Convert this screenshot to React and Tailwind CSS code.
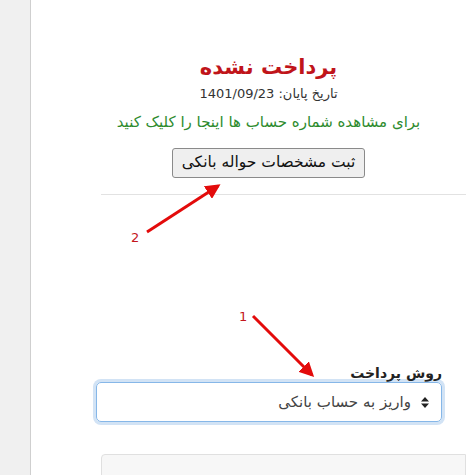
export default function App() {
  const fa = { fontFamily: '"DejaVu Sans", "Noto Sans", sans-serif' };
  return (
    <div className="relative flex h-[475px] w-[466px] overflow-hidden bg-white" style={fa}>
      <div className="w-[31px] shrink-0 border-r border-[#cfcfcf] bg-[#f0f0f0]" />
      <div className="flex-1">
        <div dir="rtl" className="ml-[65px] mr-[25px] flex flex-col items-center pt-[50px]">
          <div className="text-[21px] font-bold leading-[34px] text-[#c0141a]">پرداخت نشده</div>
          <div className="mt-[1px] text-[13px] leading-[18px] text-[#333]">تاریخ پایان: 1401/09/23</div>
          <div className="mt-[8px] text-[15px] leading-[22px] text-[#2e8b2e]">برای مشاهده شماره حساب ها اینجا را کلیک کنید</div>
          <button className="mt-[15px] h-[30px] rounded-[3px] border border-[#8a8a8a] bg-[#efefef] px-[9px] text-[15.5px] text-[#111]">ثبت مشخصات حواله بانکی</button>
        </div>
        <div className="ml-[70px] mt-[16px] h-px bg-[#e2e2e2]" />
        <div dir="rtl" className="ml-[65px] mr-[24px] mt-[168px]">
          <div className="text-[14px] font-bold leading-[20px] text-[#222]">روش پرداخت</div>
          <div className="mt-[-1px] flex h-[40px] items-center rounded-[5px] border border-[#86b7e8] px-[12px] text-[15px] text-[#444] shadow-[0_0_0_3px_#d2e3f5]">
            <svg className="ml-[10px]" width="8" height="11" viewBox="0 0 8 11">
              <path d="M4 0 L8 4.5 L0 4.5 Z M4 11 L8 6.5 L0 6.5 Z" fill="#222" />
            </svg>
            <span>واریز به حساب بانکی</span>
          </div>
        </div>
        <div className="ml-[70px] mt-[32px] h-[40px] rounded-tl-[4px] border border-[#e0e0e0] bg-[#f7f7f7]" />
      </div>
      <svg className="pointer-events-none absolute left-0 top-0" width="466" height="475">
        <defs>
          <marker id="ah" markerWidth="5" markerHeight="5" refX="4" refY="2.5" orient="auto">
            <path d="M0,0 L5,2.5 L0,5 z" fill="#e30b0b" />
          </marker>
        </defs>
        <line x1="147" y1="232" x2="218" y2="186" stroke="#e30b0b" strokeWidth="3" markerEnd="url(#ah)" />
        <line x1="253" y1="316" x2="312" y2="375" stroke="#e30b0b" strokeWidth="3" markerEnd="url(#ah)" />
        <text x="131" y="242" fontSize="13" fill="#c4161c" fontFamily="DejaVu Sans, sans-serif">2</text>
        <text x="239" y="321" fontSize="13" fill="#c4161c" fontFamily="DejaVu Sans, sans-serif">1</text>
      </svg>
    </div>
  );
}
